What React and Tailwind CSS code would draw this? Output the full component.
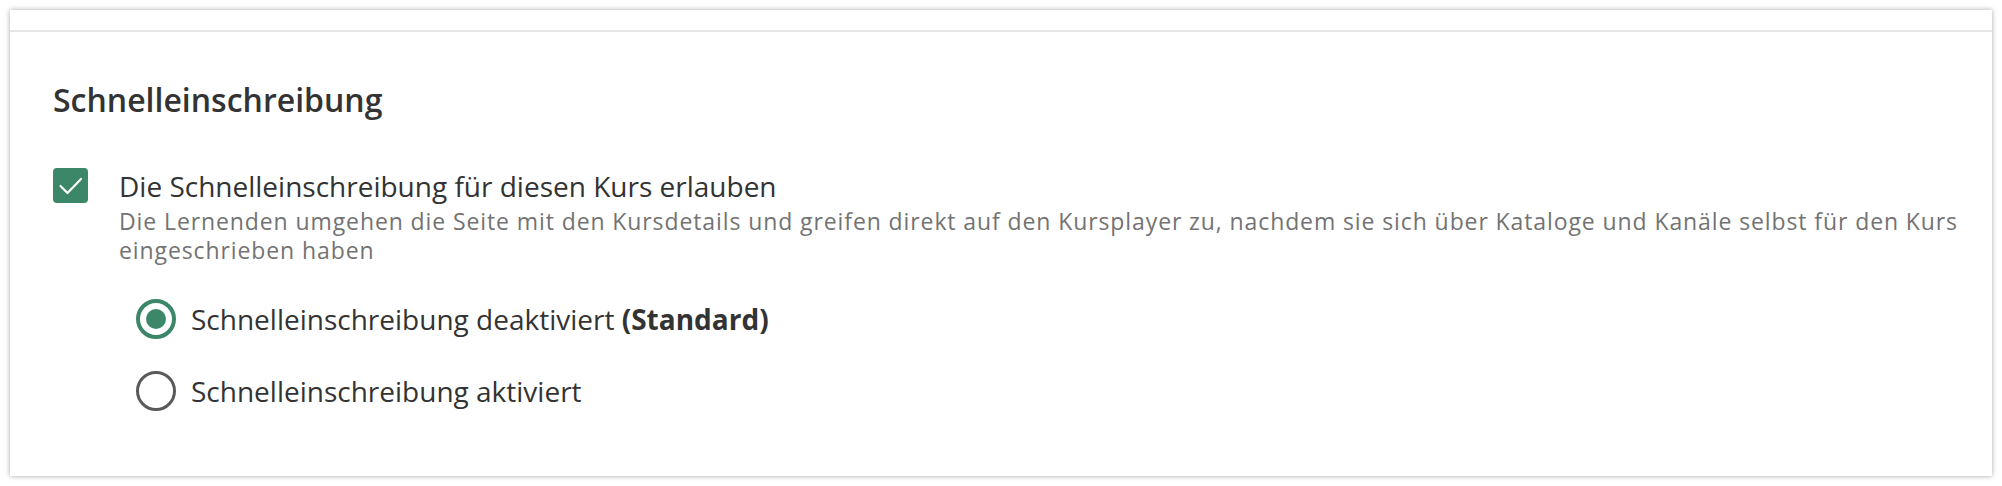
import React from "react";

export default function App() {
  return (
    <div className="bg-white w-[2002px] h-[486px] p-[10px]" style={{ fontFamily: '"Open Sans", "Noto Sans", sans-serif' }}>
      <div className="h-[466px] bg-white shadow-[0_0_5px_rgba(0,0,0,0.35)] flex flex-col">
        <div className="h-[22px] border-b-2 border-[#e6e6e6] shrink-0"></div>
        <div className="pl-[43px] pr-[20px]">
          <h2 className="mt-[46px] text-[32px] leading-[44px] font-semibold text-[#333333]">Schnelleinschreibung</h2>
          <div className="mt-[46px] flex gap-[31px]">
            <div className="w-[35px] h-[35px] shrink-0 rounded-[4px] bg-[#3b8767] flex items-center justify-center">
              <svg width="35" height="35" viewBox="0 0 35 35" fill="none">
                <polyline points="7.5,18 14.5,25 28,11" stroke="#ffffff" strokeWidth="2.2" strokeLinecap="round" strokeLinejoin="round" />
              </svg>
            </div>
            <div className="flex flex-col">
              <div className="text-[28px] leading-[36px] text-[#333333]">Die Schnelleinschreibung für diesen Kurs erlauben</div>
              <div className="mt-[3px] text-[23px] leading-[29px] tracking-[0.9px] text-[#737373] whitespace-nowrap">
                Die Lernenden umgehen die Seite mit den Kursdetails und greifen direkt auf den Kursplayer zu, nachdem sie sich über Kataloge und Kanäle selbst für den Kurs
                <br />
                eingeschrieben haben
              </div>
            </div>
          </div>
          <div className="ml-[83px] mt-[34px] flex flex-col gap-[32px]">
            <div className="h-[40px] flex items-center gap-[15px]">
              <div className="w-[40px] h-[40px] rounded-full border-[4px] border-[#3b8767] flex items-center justify-center shrink-0">
                <div className="w-[20px] h-[20px] rounded-full bg-[#3b8767]"></div>
              </div>
              <span className="text-[28px] leading-[36px] text-[#333333]">
                Schnelleinschreibung deaktiviert <span className="font-bold">(Standard)</span>
              </span>
            </div>
            <div className="h-[40px] flex items-center gap-[15px]">
              <div className="w-[40px] h-[40px] rounded-full border-[3px] border-[#5a5a5a] shrink-0"></div>
              <span className="text-[28px] leading-[36px] text-[#333333]">Schnelleinschreibung aktiviert</span>
            </div>
          </div>
        </div>
      </div>
    </div>
  );
}
